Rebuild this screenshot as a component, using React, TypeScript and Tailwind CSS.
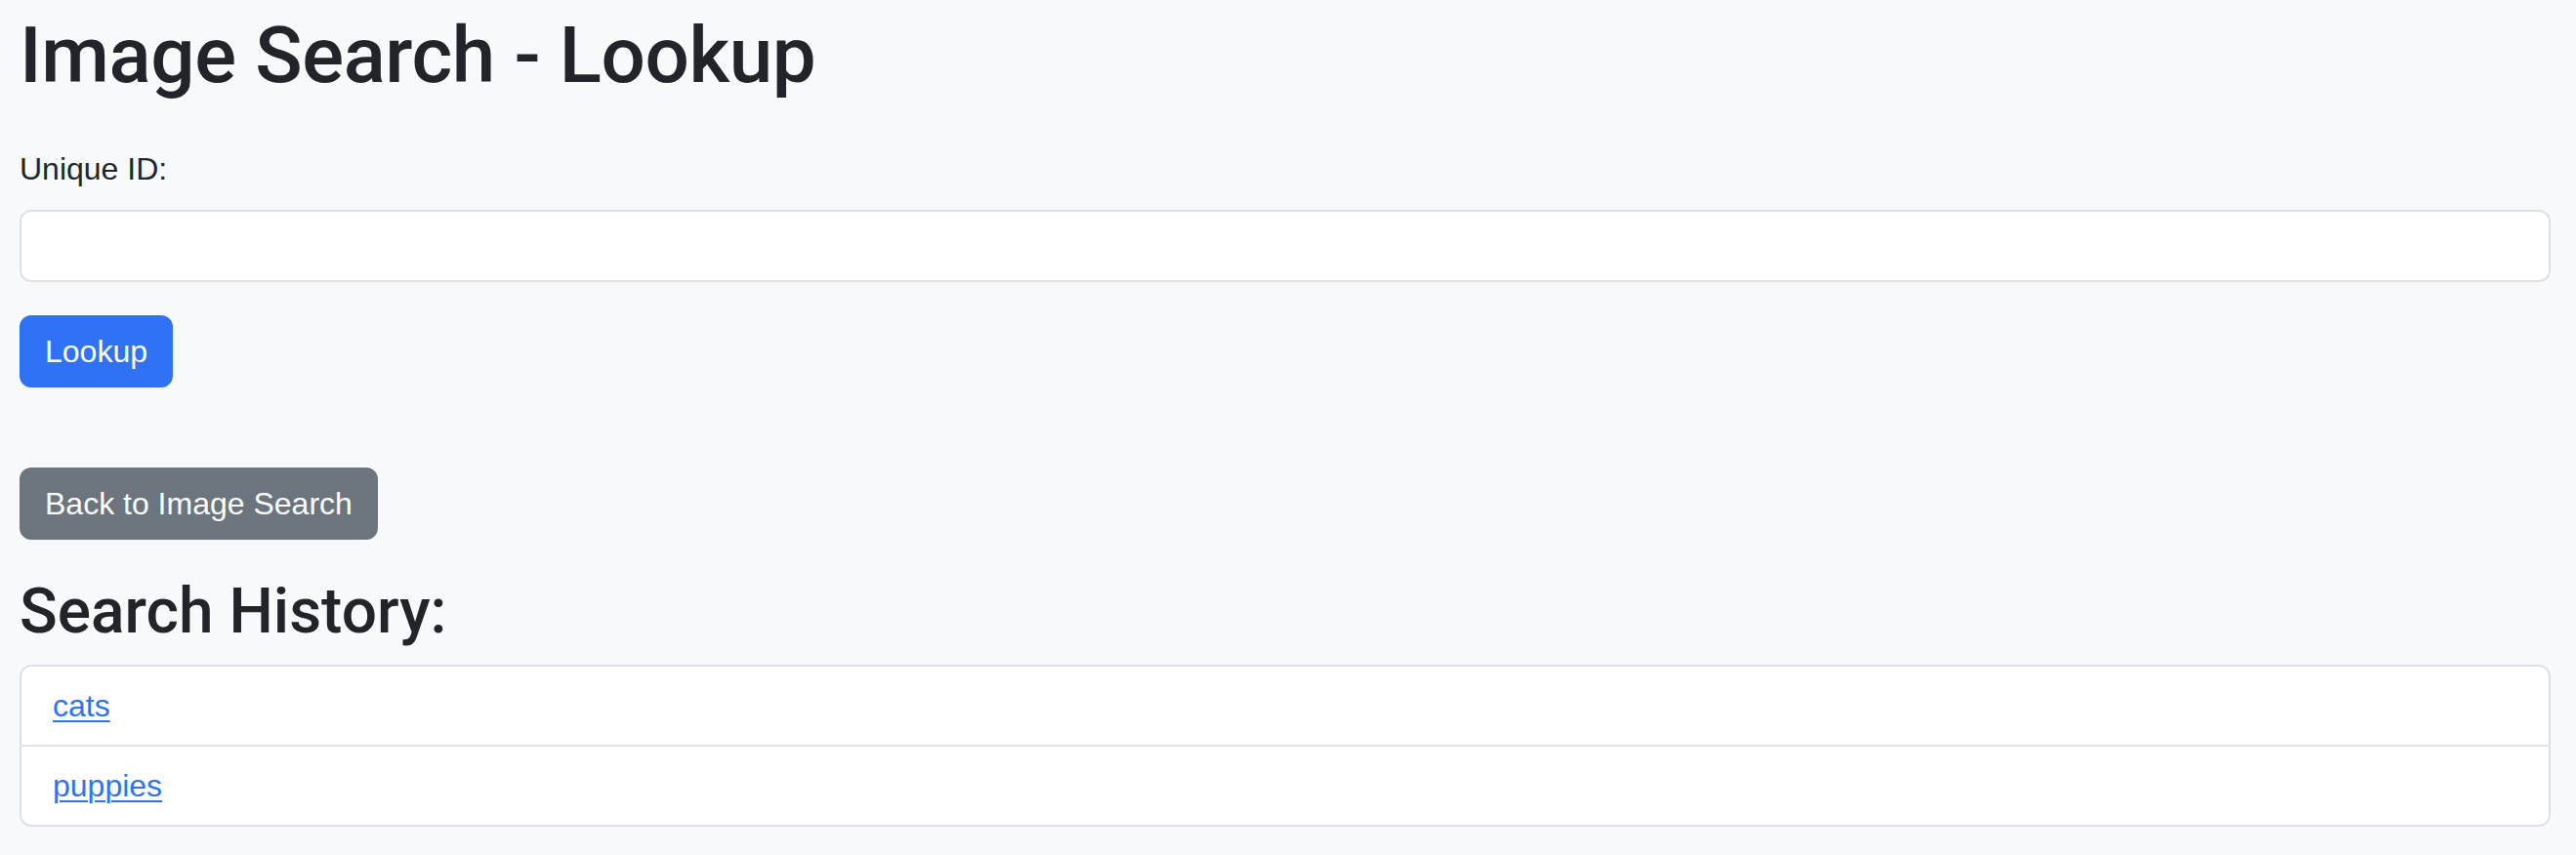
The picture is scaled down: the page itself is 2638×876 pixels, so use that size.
import { useState } from "react";

export default function App() {
    const [uniqueId, setUniqueId] = useState("");
    const history = ["cats", "puppies"];

    return (
        <div className="min-h-[876px] bg-[#f8f9fa] text-[#212529] font-['Liberation_Sans',Arial,sans-serif] pt-[9px] pl-[20px] pr-[26px]">
            <h1 className="font-['Roboto',Arial,sans-serif] text-[80px] leading-[96px] font-medium tracking-[-0.4px] mb-[44px]">Image Search - Lookup</h1>

            <label htmlFor="uid" className="block text-[32px] leading-[48px] mb-[18px]">Unique ID:</label>
            <input
                id="uid"
                type="text"
                className="block w-full h-[74px] bg-white border-2 border-[#dee2e6] rounded-[12px] px-[24px] text-[32px] outline-none"
                value={uniqueId}
                onChange={(e) => setUniqueId(e.target.value)}
            />

            <button className="mt-[34px] h-[74px] px-[24px] border-2 border-[#2f72f5] bg-[#2f72f5] text-white text-[32px] rounded-[12px]">
                Lookup
            </button>

            <div className="mt-[82px]">
                <button className="h-[74px] px-[24px] border-2 border-[#6c757d] bg-[#6c757d] text-white text-[32px] rounded-[12px]">
                    Back to Image Search
                </button>
            </div>

            <h2 className="font-['Roboto',Arial,sans-serif] mt-[35px] text-[64px] leading-[77px] font-medium mb-[16px]">Search History:</h2>

            <ul className="bg-white border-2 border-[#dee2e6] rounded-[12px]">
                {history.map((term, i) => (
                    <li
                        key={term}
                        className={"px-[32px] py-[16px] text-[32px] leading-[48px] " + (i > 0 ? "border-t-2 border-[#dee2e6]" : "")}
                    >
                        <a href="#" className="text-[#2f72f5] underline underline-offset-[4px] decoration-[2px]">{term}</a>
                    </li>
                ))}
            </ul>
        </div>
    );
}
